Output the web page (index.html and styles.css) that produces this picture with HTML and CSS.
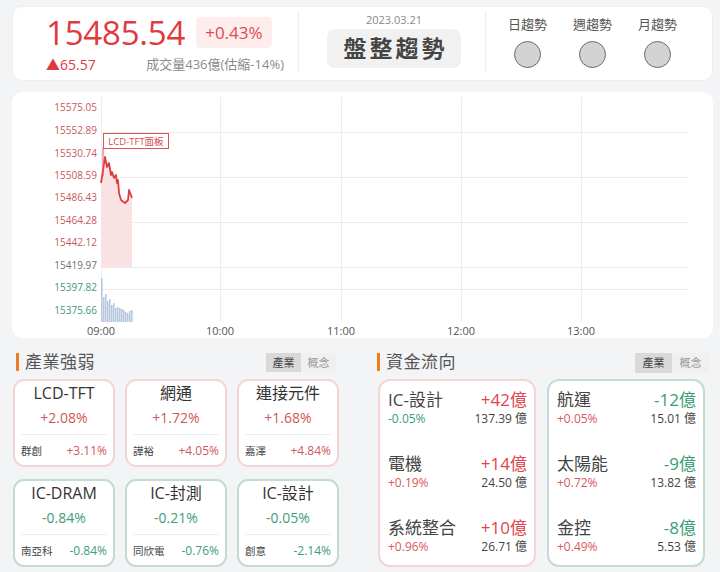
FILE: index.html
```html
<!DOCTYPE html>
<html lang="zh-Hant">
<head>
<meta charset="utf-8">
<link rel="stylesheet" href="styles.css">
</head>
<body>
<div class="page">
  <section class="top-card">
    <div class="quote">
      <div class="price-row">
        <span class="price">15485.54</span>
        <span class="badge">+0.43%</span>
      </div>
      <div class="sub-row">
        <span class="change">▲65.57</span>
        <span class="volume">成交量436億(估縮-14%)</span>
      </div>
    </div>
    <div class="divider"></div>
    <div class="status">
      <div class="date">2023.03.21</div>
      <div class="status-box">盤整趨勢</div>
    </div>
    <div class="divider"></div>
    <div class="trends">
      <div class="trend"><span class="trend-label">日趨勢</span><span class="dot"></span></div>
      <div class="trend"><span class="trend-label">週趨勢</span><span class="dot"></span></div>
      <div class="trend"><span class="trend-label">月趨勢</span><span class="dot"></span></div>
    </div>
  </section>

  <section class="chart-card">
    <svg class="chart" width="701" height="246" viewBox="0 0 701 246">
      <g class="grid">
        <line x1="89" y1="40" x2="675" y2="40"/>
        <line x1="89" y1="85" x2="675" y2="85"/>
        <line x1="89" y1="130" x2="675" y2="130"/>
        <line x1="89" y1="175" x2="675" y2="175"/>
        <line x1="89" y1="197" x2="675" y2="197"/>
        <line x1="89" y1="5" x2="89" y2="230"/>
        <line x1="208" y1="5" x2="208" y2="230"/>
        <line x1="329" y1="5" x2="329" y2="230"/>
        <line x1="449" y1="5" x2="449" y2="230"/>
        <line x1="569" y1="5" x2="569" y2="230"/>
      </g>
      <g class="ylab">
        <text x="85" y="19" class="up">15575.05</text>
        <text x="85" y="42" class="up">15552.89</text>
        <text x="85" y="65" class="up">15530.74</text>
        <text x="85" y="87" class="up">15508.59</text>
        <text x="85" y="109" class="up">15486.43</text>
        <text x="85" y="132" class="up">15464.28</text>
        <text x="85" y="154" class="up">15442.12</text>
        <text x="85" y="177" class="flat">15419.97</text>
        <text x="85" y="199" class="down">15397.82</text>
        <text x="85" y="222" class="down">15375.66</text>
      </g>
      <g class="xlab">
        <text x="89" y="243">09:00</text>
        <text x="208" y="243">10:00</text>
        <text x="329" y="243">11:00</text>
        <text x="449" y="243">12:00</text>
        <text x="569" y="243">13:00</text>
      </g>
      <path class="area" d="M89 91 L90 85 L93 65 L95 75 L97 71 L99 83 L100 80 L102 86 L104 83 L105 91 L106 88 L107 101 L109 108 L113 111 L116 108 L117 98 L120 106 L120 175 L89 175 Z"/>
      <path class="line" d="M89 91 L90 85 L93 65 L95 75 L97 71 L99 83 L100 80 L102 86 L104 83 L105 91 L106 88 L107 101 L109 108 L113 111 L116 108 L117 98 L120 106"/>
      <g class="vol">
        <rect x="89" y="186" width="1.6" height="44"/>
        <rect x="91" y="205" width="1.6" height="25"/>
        <rect x="93" y="202" width="1.6" height="28"/>
        <rect x="95" y="209" width="1.6" height="21"/>
        <rect x="97" y="207" width="1.6" height="23"/>
        <rect x="99" y="213" width="1.6" height="17"/>
        <rect x="101" y="211" width="1.6" height="19"/>
        <rect x="103" y="216" width="1.6" height="14"/>
        <rect x="105" y="215" width="1.6" height="15"/>
        <rect x="107" y="216" width="1.6" height="14"/>
        <rect x="109" y="217" width="1.6" height="13"/>
        <rect x="111" y="218" width="1.6" height="12"/>
        <rect x="113" y="220" width="1.6" height="10"/>
        <rect x="115" y="221" width="1.6" height="9"/>
        <rect x="117" y="219" width="1.6" height="11"/>
        <rect x="119" y="218" width="1.6" height="12"/>
      </g>
      <line class="mark-line" x1="91" y1="56" x2="91" y2="84"/>
      <rect class="mark-box" x="91.5" y="41.5" width="65" height="15"/>
      <text class="mark-text" x="124" y="52.5">LCD-TFT面板</text>
    </svg>
  </section>

  <div class="bottom">
    <section class="panel panel-left">
      <div class="panel-head">
        <h2 class="panel-title">產業強弱</h2>
        <div class="toggle"><span class="tg on">產業</span><span class="tg">概念</span></div>
      </div>
      <div class="ind-grid">
        <div class="ind-card red">
          <div class="ind-name">LCD-TFT</div>
          <div class="ind-pct">+2.08%</div>
          <div class="ind-foot"><span class="ind-stock">群創</span><span class="ind-val">+3.11%</span></div>
        </div>
        <div class="ind-card red">
          <div class="ind-name">網通</div>
          <div class="ind-pct">+1.72%</div>
          <div class="ind-foot"><span class="ind-stock">譁裕</span><span class="ind-val">+4.05%</span></div>
        </div>
        <div class="ind-card red">
          <div class="ind-name">連接元件</div>
          <div class="ind-pct">+1.68%</div>
          <div class="ind-foot"><span class="ind-stock">嘉澤</span><span class="ind-val">+4.84%</span></div>
        </div>
        <div class="ind-card green">
          <div class="ind-name">IC-DRAM</div>
          <div class="ind-pct">-0.84%</div>
          <div class="ind-foot"><span class="ind-stock">南亞科</span><span class="ind-val">-0.84%</span></div>
        </div>
        <div class="ind-card green">
          <div class="ind-name">IC-封測</div>
          <div class="ind-pct">-0.21%</div>
          <div class="ind-foot"><span class="ind-stock">同欣電</span><span class="ind-val">-0.76%</span></div>
        </div>
        <div class="ind-card green">
          <div class="ind-name">IC-設計</div>
          <div class="ind-pct">-0.05%</div>
          <div class="ind-foot"><span class="ind-stock">創意</span><span class="ind-val">-2.14%</span></div>
        </div>
      </div>
    </section>

    <section class="panel panel-right">
      <div class="panel-head">
        <h2 class="panel-title">資金流向</h2>
        <div class="toggle"><span class="tg on">產業</span><span class="tg">概念</span></div>
      </div>
      <div class="flow-grid">
        <div class="flow-card red">
          <div class="flow-row">
            <span class="flow-name">IC-設計</span><span class="flow-amt up">+42億</span>
            <span class="flow-pct down">-0.05%</span><span class="flow-turn">137.39 億</span>
          </div>
          <div class="flow-row">
            <span class="flow-name">電機</span><span class="flow-amt up">+14億</span>
            <span class="flow-pct up">+0.19%</span><span class="flow-turn">24.50 億</span>
          </div>
          <div class="flow-row">
            <span class="flow-name">系統整合</span><span class="flow-amt up">+10億</span>
            <span class="flow-pct up">+0.96%</span><span class="flow-turn">26.71 億</span>
          </div>
        </div>
        <div class="flow-card green">
          <div class="flow-row">
            <span class="flow-name">航運</span><span class="flow-amt down">-12億</span>
            <span class="flow-pct up">+0.05%</span><span class="flow-turn">15.01 億</span>
          </div>
          <div class="flow-row">
            <span class="flow-name">太陽能</span><span class="flow-amt down">-9億</span>
            <span class="flow-pct up">+0.72%</span><span class="flow-turn">13.82 億</span>
          </div>
          <div class="flow-row">
            <span class="flow-name">金控</span><span class="flow-amt down">-8億</span>
            <span class="flow-pct up">+0.49%</span><span class="flow-turn">5.53 億</span>
          </div>
        </div>
      </div>
    </section>
  </div>
</div>
</body>
</html>
```

FILE: styles.css
```css
* { box-sizing: border-box; }
html, body { margin: 0; padding: 0; }
body {
  width: 720px;
  height: 572px;
  overflow: hidden;
  background: #f3f4f6;
  font-family: "Open Sans", "Noto Sans CJK TC", sans-serif;
  color: #444;
}
.page { padding: 6px 7px 0 12px; }

/* top card */
.top-card {
  display: flex;
  height: 75px;
  background: #fff;
  border-radius: 10px;
  border: 1px solid #eceef0;
}
.quote {
  width: 285px;
  padding: 3px 14px 0 33px;
}
.price-row { display: flex; align-items: center; gap: 11px; height: 45px; }
.price { font-size: 33px; color: #e0393f; line-height: 45px; letter-spacing: -0.2px; }
.badge {
  background: #fdeded;
  color: #e04a4f;
  font-size: 17px;
  line-height: 31px;
  height: 31px;
  padding: 0 9px;
  border-radius: 4px;
}
.sub-row { display: flex; justify-content: space-between; align-items: center; height: 19px; }
.change { color: #e0393f; font-size: 14px; line-height: 19px; }
.volume { color: #8a8a8a; font-size: 13px; line-height: 19px; }

.divider { width: 1px; background: #eeeeee; margin: 4px 0 7px; }

.status {
  width: 186px;
  display: flex;
  flex-direction: column;
  align-items: center;
  padding-top: 6px;
}
.date { font-size: 11px; color: #8a8a8a; line-height: 14px; margin-left: 4px; }
.status-box {
  margin-top: 2px;
  margin-left: 4px;
  width: 134px;
  height: 39px;
  background: #f1f1f1;
  border-radius: 8px;
  text-align: center;
  font-size: 23px;
  line-height: 39px;
  font-weight: 600;
  color: #444;
  letter-spacing: 3px;
  padding-left: 3px;
}
.trends { display: flex; padding-left: 9px; padding-top: 8px; }
.trend { width: 65px; display: flex; flex-direction: column; align-items: center; }
.trend-label { font-size: 13px; line-height: 18px; color: #555; }
.dot {
  margin-top: 8px;
  width: 27px;
  height: 27px;
  border-radius: 50%;
  background: #d3d3d3;
  border: 1.5px solid #6a6a6a;
}

/* chart card */
.chart-card {
  margin-top: 11px;
  width: 701px;
  height: 246px;
  background: #fff;
  border-radius: 10px;
}
.chart { display: block; }
.grid line { stroke: #ececec; stroke-width: 1; shape-rendering: crispEdges; }
.ylab text { font-size: 10px; text-anchor: end; font-family: "Open Sans", sans-serif; }
.ylab .up { fill: #c8595b; }
.ylab .flat { fill: #6f6f6f; }
.ylab .down { fill: #3f9a74; }
.xlab text { font-size: 11px; fill: #555; text-anchor: middle; font-family: "Open Sans", sans-serif; }
.area { fill: #fbe2e2; }
.line { fill: none; stroke: #dc3d41; stroke-width: 1.8; stroke-linejoin: round; }
.vol rect { fill: #b8c9df; }
.mark-line { stroke: #d9565a; stroke-width: 1; }
.mark-box { fill: #fff; stroke: #d9565a; stroke-width: 1; }
.mark-text { font-size: 9.5px; fill: #d04e52; text-anchor: middle; font-family: "Open Sans", "Noto Sans CJK TC", sans-serif; }

/* bottom */
.bottom { display: flex; gap: 38px; margin-top: 14px; padding-left: 1px; }
.panel-left { width: 326px; }
.panel-right { width: 332px; }
.panel-head {
  display: flex;
  justify-content: space-between;
  align-items: center;
  height: 20px;
}
.panel-left .panel-head { padding: 0 3px; }
.panel-right .panel-head { padding-left: 0; }
.panel-title {
  margin: 0;
  font-size: 17px;
  font-weight: 400;
  color: #555;
  line-height: 20px;
  border-left: 3px solid #ee7d21;
  padding-left: 6px;
  height: 18px;
  display: flex;
  align-items: center;
  letter-spacing: 0.5px;
}
.toggle { display: flex; height: 19px; }
.tg {
  width: 35px;
  font-size: 11px;
  line-height: 19px;
  text-align: center;
  background: #f0f0f0;
  color: #9a9a9a;
}
.tg.on { background: #d9d9d9; color: #444; }
.panel-right .tg { width: 37px; height: 20px; line-height: 20px; }

.ind-grid {
  display: grid;
  grid-template-columns: repeat(3, 102px);
  column-gap: 10px;
  row-gap: 12px;
  margin-top: 7px;
}
.ind-card {
  height: 88px;
  background: #fff;
  border-radius: 11px;
  border: 2px solid #f3d5d5;
  padding: 1px 6px 0;
  text-align: center;
}
.ind-card.green { border-color: #c2dcd2; }
.ind-name { font-size: 16px; line-height: 22px; color: #333; }
.ind-pct { font-size: 14px; line-height: 18px; margin-top: 5px; }
.red .ind-pct, .red .ind-val { color: #d0585b; }
.green .ind-pct, .green .ind-val { color: #3f9c77; }
.ind-foot {
  margin-top: 7px;
  border-top: 1px solid #eeeeee;
  padding-top: 7px;
  display: flex;
  justify-content: space-between;
  align-items: center;
  height: 24px;
}
.ind-stock { font-size: 10.5px; color: #444; }
.ind-val { font-size: 12px; }

.flow-grid {
  display: grid;
  grid-template-columns: 158px 158px;
  column-gap: 11px;
  margin-top: 7px;
  padding-left: 1px;
}
.flow-card {
  height: 188px;
  background: #fff;
  border-radius: 12px;
  border: 2px solid #f3d5d5;
  padding: 9px 7px 0 8px;
}
.flow-card.green { border-color: #c2dcd2; }
.flow-row {
  display: grid;
  grid-template-columns: 1fr auto;
  align-content: start;
  height: 64px;
}
.flow-name { font-size: 17px; line-height: 20px; color: #444; }
.flow-amt { font-size: 17px; line-height: 20px; text-align: right; }
.flow-pct { font-size: 12px; line-height: 18px; }
.flow-turn { font-size: 12px; line-height: 18px; text-align: right; color: #444; }
.up { color: #e0464b; }
.down { color: #3a9e75; }
.flow-pct.up { color: #d9585b; }
```
